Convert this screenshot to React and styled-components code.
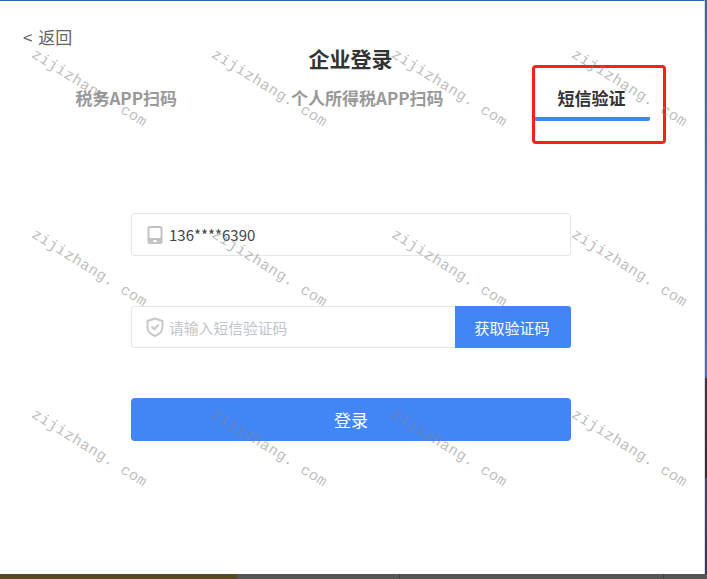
import React from 'react'
import styled, { createGlobalStyle } from 'styled-components'

const GlobalStyle = createGlobalStyle`
  html, body {
    margin: 0;
    padding: 0;
    background: #4f5054;
  }
  * {
    box-sizing: border-box;
  }
`

const Screen = styled.div`
  position: relative;
  width: 707px;
  height: 579px;
  overflow: hidden;
  display: flex;
  flex-direction: column;
  font-family: "Noto Sans CJK SC", "Noto Sans", sans-serif;
`

const Main = styled.div`
  height: 574px;
  display: flex;
`

const Modal = styled.div`
  width: 705px;
  background: #fff;
  border-top: 1px solid #2a66b4;
  border-right: 1px solid #d9dee8;
  display: flex;
  flex-direction: column;
`

const SideEdge = styled.div`
  flex: 1;
  background: linear-gradient(
    to bottom,
    #2a6bbd 0,
    #2f78cf 378px,
    #3a3840 378px,
    #2f2d33 478px,
    #3e4a6b 478px,
    #2e3a5c 574px
  );
`

const Desktop = styled.div`
  flex: 1;
  display: flex;
`

const DesktopBar = styled.div`
  width: ${p => p.$w}px;
  background: ${p => p.$bg};
  border-right: ${p => (p.$divider ? '1px solid #444' : 'none')};
`

const Back = styled.div`
  margin: 24px 0 0 23px;
  font-size: 17px;
  line-height: 24px;
  height: 24px;
  color: #666;
`

const BackArrow = styled.span`
  margin-right: 2px;
`

const Title = styled.div`
  font-size: 21px;
  font-weight: 700;
  line-height: 28px;
  height: 28px;
  margin-top: -5px;
  padding-right: 3px;
  text-align: center;
  color: #333;
`

const Tabs = styled.div`
  display: flex;
  justify-content: center;
  gap: 66px;
  margin-top: 14px;
  padding-right: 3px;
`

const Tab = styled.div`
  padding: 0 24px;
  height: 35px;
  font-size: 17px;
  font-weight: 700;
  line-height: 24px;
  color: ${p => (p.$active ? '#333' : '#999')};
  border-bottom: 4px solid ${p => (p.$active ? '#4285f4' : 'transparent')};
  border-radius: 2px;
`

const Form = styled.div`
  width: 440px;
  margin: 92px 0 0 131px;
  display: flex;
  flex-direction: column;
`

const Field = styled.div`
  height: ${p => p.$h}px;
  margin-bottom: ${p => p.$mb}px;
  display: flex;
  align-items: center;
  border: 1px solid #e4e6e9;
  border-radius: 3px;
  background: #fff;
`

const FieldIcon = styled.svg`
  width: 18px;
  height: 20px;
  margin-left: 14px;
  flex: none;
`

const FieldText = styled.div`
  flex: 1;
  margin-left: 5px;
  font-size: ${p => (p.$placeholder ? '14.8px' : '15px')};
  color: ${p => (p.$placeholder ? '#c0c4cc' : '#444')};
`

const CodeButton = styled.div`
  width: 116px;
  height: 42px;
  margin: -1px -1px -1px 0;
  padding-right: 2px;
  display: flex;
  align-items: center;
  justify-content: center;
  background: #4285f4;
  border-radius: 0 3px 3px 0;
  color: #fff;
  font-size: 15px;
`

const LoginButton = styled.div`
  height: 43px;
  display: flex;
  align-items: center;
  justify-content: center;
  background: #4285f4;
  border-radius: 4px;
  color: #fff;
  font-size: 17px;
`

const Highlight = styled.div`
  position: absolute;
  left: 532px;
  top: 65px;
  width: 134px;
  height: 79px;
  border: 3px solid #f5211a;
  border-radius: 4px;
`

const Watermarks = styled.div`
  position: absolute;
  left: 0;
  top: 0;
  width: 720px;
  height: 540px;
  display: grid;
  grid-template-columns: repeat(4, 180px);
  grid-auto-rows: 180px;
  pointer-events: none;
`

const Mark = styled.div`
  width: 180px;
  height: 180px;
  padding: 81px 0 0 22px;
  font-family: "Liberation Mono", monospace;
  font-size: 15px;
  line-height: 17px;
  letter-spacing: 0.5px;
  white-space: nowrap;
  color: rgba(130, 130, 130, 0.55);
  transform: rotate(32deg);
`

const PhoneIcon = () => (
  <FieldIcon viewBox="0 0 18 20">
    <rect x="1.5" y="1" width="15" height="18" rx="2.5" fill="#c2c2c2" />
    <rect x="3.5" y="3" width="11" height="10" rx="1" fill="#fff" />
    <rect x="7" y="15" width="4" height="2" rx="1" fill="#fff" />
  </FieldIcon>
)

const ShieldIcon = () => (
  <FieldIcon viewBox="0 0 18 20">
    <path d="M9 1.5 L16.5 4 V10 C16.5 14.5 13 17.5 9 19 C5 17.5 1.5 14.5 1.5 10 V4 Z" fill="none" stroke="#c8c8c8" strokeWidth="2" strokeLinejoin="round" />
    <path d="M5.5 9.5 L8.3 12.3 L12.8 7.5" fill="none" stroke="#c8c8c8" strokeWidth="2" />
  </FieldIcon>
)

export default function App() {
  return (
    <Screen>
      <GlobalStyle />
      <Main>
        <Modal>
          <Back><BackArrow>&lt;</BackArrow> 返回</Back>
          <Title>企业登录</Title>
          <Tabs>
            <Tab>税务APP扫码</Tab>
            <Tab>个人所得税APP扫码</Tab>
            <Tab $active>短信验证</Tab>
          </Tabs>
          <Form>
            <Field $h={43} $mb={50}>
              <PhoneIcon />
              <FieldText>136****6390</FieldText>
            </Field>
            <Field $h={42} $mb={50}>
              <ShieldIcon />
              <FieldText $placeholder>请输入短信验证码</FieldText>
              <CodeButton>获取验证码</CodeButton>
            </Field>
            <LoginButton>登录</LoginButton>
          </Form>
        </Modal>
        <SideEdge />
      </Main>
      <Desktop>
        <DesktopBar $w={237} $bg="#5a4a20" />
        <DesktopBar $w={163} $bg="#565656" $divider />
        <DesktopBar $w={264} $bg="#565656" $divider />
        <DesktopBar $w={43} $bg="#565656" />
      </Desktop>
      <Highlight />
      <Watermarks>
        {Array.from({ length: 12 }).map((_, i) => (
          <Mark key={i}>zijizhang. com</Mark>
        ))}
      </Watermarks>
    </Screen>
  )
}
